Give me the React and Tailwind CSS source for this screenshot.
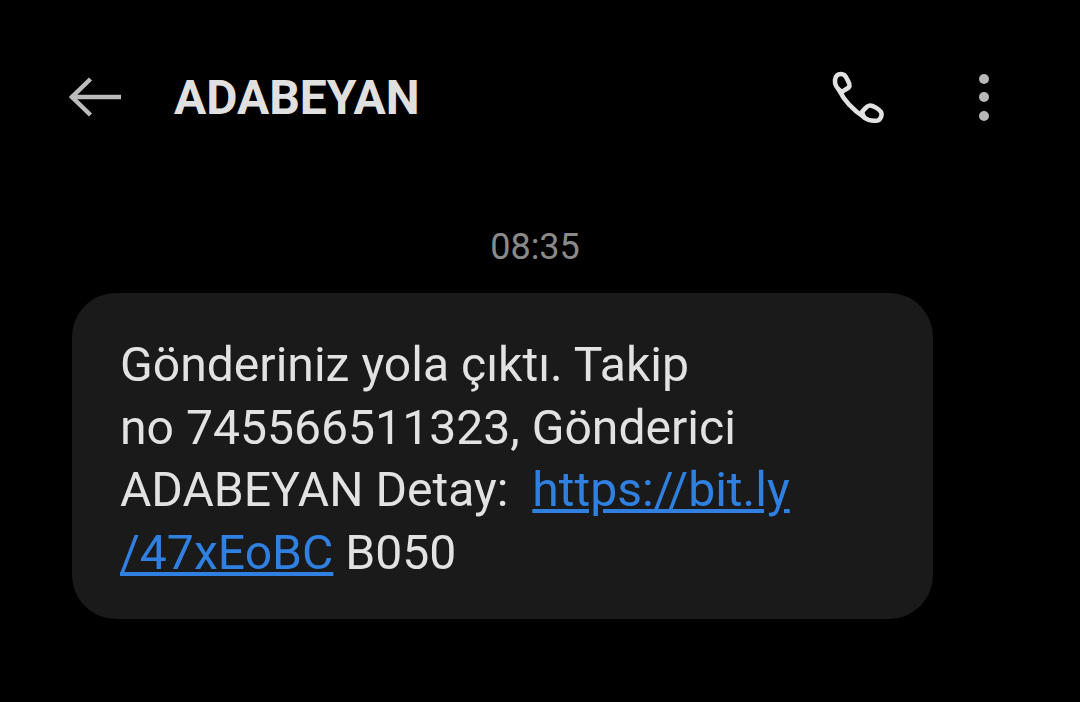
import React from "react";

function BackArrow() {
  return (
    <svg width="54" height="42" viewBox="0 0 54 42" fill="none" stroke="#bcbcbc" strokeWidth="4.5">
      <path d="M2 21H52" />
      <path d="M21.5 3L3 21L21.5 39" />
    </svg>
  );
}

function PhoneIcon() {
  return (
    <svg width="54" height="54" viewBox="0 -1 54 54" fill="none" stroke="#e2e2e2" strokeWidth="4.600" strokeLinejoin="round" strokeLinecap="round">
      {/* earpiece */}
      <path d="M12 21C7 18 4.500 13 5 9C5.500 5 8 3 11 3C14 3 16 5.500 17 8C18 10.500 20 12.500 19.500 15C19 17.500 14 19 12 21Z" />
      {/* handle */}
      <path d="M9 19C15 31 23 39 34 46" />
      {/* mouthpiece */}
      <path d="M32 41C34.500 38 37 34.500 40 34.500C43 34.500 49 38 51 41C52.500 44 50.500 49 47.500 49.500C44 50 38 49.500 34 46.500Z" />
    </svg>
  );
}

export default function App() {
  return (
    <div className="w-[1080px] h-[702px] bg-black overflow-hidden font-['Roboto',sans-serif]">
      <header className="flex items-center h-[74px] mt-[60px] pl-[69px] pr-[91px]">
        <BackArrow />
        <h1 className="ml-[51px] mt-[2px] text-[48px] leading-[74px] font-bold text-[#e0e0e0]">ADABEYAN</h1>
        <div className="ml-auto flex items-center gap-[95px]">
          <PhoneIcon />
          <div className="flex flex-col gap-[8.500px]">
            <span className="w-[10px] h-[10px] rounded-full bg-[#b8b8b8]" />
            <span className="w-[10px] h-[10px] rounded-full bg-[#b8b8b8]" />
            <span className="w-[10px] h-[10px] rounded-full bg-[#b8b8b8]" />
          </div>
        </div>
      </header>

      <p className="mt-[93px] h-[40px] pr-[10px] text-center text-[36px] leading-[40px] text-[#8a8a8a]">08:35</p>

      <div className="mt-[26px] ml-[72px] w-[861px] h-[326px] rounded-[44px] bg-[#1a1a1a] pl-[48px] pt-[41px] text-[48.100px] leading-[62.700px] text-[#e2e2e2]">
        <p className="whitespace-nowrap">Gönderiniz yola çıktı. Takip</p>
        <p className="whitespace-nowrap">no 745566511323, Gönderici</p>
        <p className="whitespace-pre">
          ADABEYAN Detay:  <a className="text-[#2f80e0] underline">https://bit.ly</a>
        </p>
        <p className="whitespace-nowrap">
          <a className="text-[#2f80e0] underline">/47xEoBC</a> B050
        </p>
      </div>
    </div>
  );
}
